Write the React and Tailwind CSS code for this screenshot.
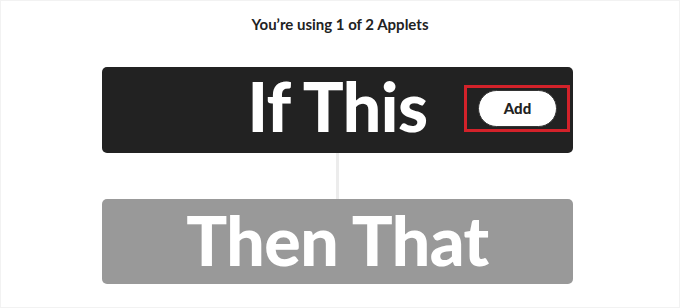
export default function App() {
  return (
    <div
      className="h-[308px] w-[680px] overflow-hidden border border-[#f2f2f2] bg-white"
      style={{ fontFamily: 'Lato, "Noto Sans", sans-serif' }}
    >
      <p className="pt-[13px] text-center text-[15px] font-bold leading-[20px] text-[#222222]">
        You’re using 1 of 2 Applets
      </p>

      <div className="ml-[101px] mt-[33px] flex w-[471px] flex-col items-center">
        <div className="relative flex h-[86px] w-full items-center justify-center rounded-[5px] bg-[#222222]">
          <span className="mb-[8px] text-[68px] font-black leading-none tracking-[-0.5px] text-white">
            If This
          </span>
          <div className="absolute left-[362px] top-[18px] border-[3px] border-[#d3222a] py-[2px] pl-[11px] pr-[10px]">
            <button className="h-[37px] w-[79px] rounded-full border border-[#333333] bg-white text-[15px] font-black text-[#222222]">
              Add
            </button>
          </div>
        </div>

        <div className="h-[46px] w-[3px] bg-[#ececec]" />

        <div className="flex h-[85px] w-full items-center justify-center rounded-[5px] bg-[#999999]">
          <span className="mb-[4px] text-[68px] font-black leading-none tracking-[-0.5px] text-white">
            Then That
          </span>
        </div>
      </div>
    </div>
  );
}
